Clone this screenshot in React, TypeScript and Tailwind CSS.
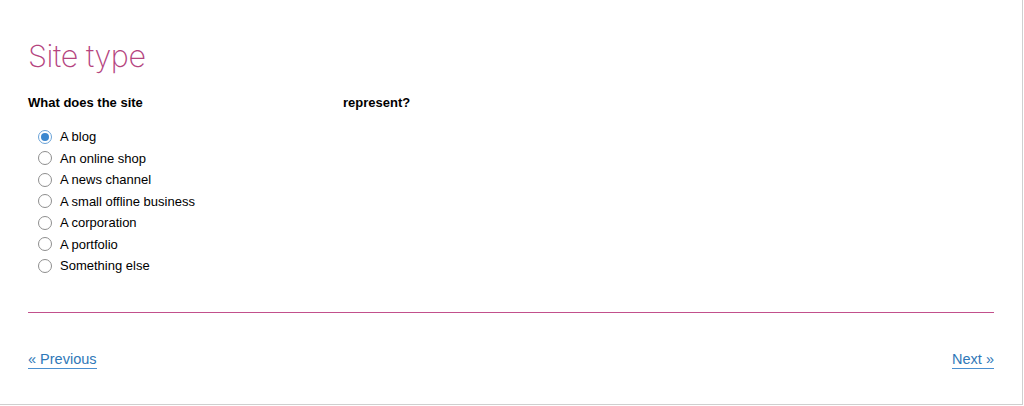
const options = [
  "A blog",
  "An online shop",
  "A news channel",
  "A small offline business",
  "A corporation",
  "A portfolio",
  "Something else",
];

function Radio({ checked }: { checked: boolean }) {
  if (checked) {
    return (
      <span className="flex h-[14px] w-[14px] items-center justify-center rounded-full border border-[#6aa3d8] bg-white">
        <span className="h-[8px] w-[8px] rounded-full bg-[#3b87cf]" />
      </span>
    );
  }
  return <span className="h-[14px] w-[14px] rounded-full border border-[#8e8e8e] bg-white" />;
}

export default function App() {
  return (
    <div className="h-[406px] w-[1024px] bg-white font-['Liberation_Sans',Arial,sans-serif] text-black">
      <div className="h-[405px] w-[1023px] border-b border-r border-[#cfcfcf] px-[28px] pt-[36px]">
        <h1 className="font-['Inter',sans-serif] text-[30.5px] font-extralight leading-[40px] tracking-[-0.4px] text-[#b5457f]">
          Site type
        </h1>
        <p className="mt-[19px] flex text-[13px] font-bold leading-[16px]">
          <span className="w-[315px]">What does the site</span>
          <span>represent?</span>
        </p>
        <ul className="mt-[15px] h-[151px] pl-[10px]">
          {options.map((o, i) => (
            <li key={o} className="flex h-[21.5px] items-center gap-[8px] text-[13px]">
              <Radio checked={i === 0} />
              <span>{o}</span>
            </li>
          ))}
        </ul>
        <div className="mt-[35px] h-px bg-[#c2508c]" />
        <div className="mt-[37px] flex justify-between text-[14.5px] leading-[18px] text-[#2f78b8]">
          <a href="#" className="border-b-[1.5px] border-[#4a8fcf]">
            « Previous
          </a>
          <a href="#" className="border-b-[1.5px] border-[#4a8fcf]">
            Next »
          </a>
        </div>
      </div>
    </div>
  );
}
